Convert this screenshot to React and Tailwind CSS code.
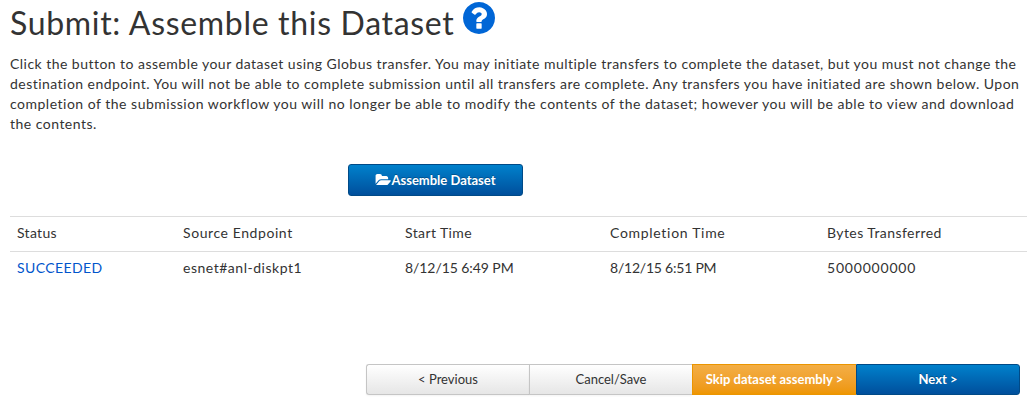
const columns = [
  { label: 'Status', value: 'SUCCEEDED', width: 'w-[166px]', head: 'tracking-[0.3px]', cell: 'tracking-[0.4px] text-[#0055cc]' },
  { label: 'Source Endpoint', value: 'esnet#anl-diskpt1', width: 'w-[222px]', head: 'tracking-[0.58px]', cell: 'tracking-[0.52px]' },
  { label: 'Start Time', value: '8/12/15 6:49 PM', width: 'w-[205px]', head: 'tracking-[0.4px]', cell: 'tracking-[-0.07px]' },
  { label: 'Completion Time', value: '8/12/15 6:51 PM', width: 'w-[217px]', head: 'tracking-[0.7px]', cell: 'tracking-[-0.22px]' },
  { label: 'Bytes Transferred', value: '5000000000', width: 'w-[207px]', head: 'tracking-[0.43px]', cell: 'tracking-[0.8px]' },
];

function HelpIcon() {
  return (
    <svg viewBox="128 128 1536 1536" className="mt-[2px] h-8 w-8 shrink-0 fill-[#0066d6]" aria-hidden="true">
      <path d="M1024 1376v-192q0-14-9-23t-23-9h-192q-14 0-23 9t-9 23v192q0 14 9 23t23 9h192q14 0 23-9t9-23zm256-672q0-88-55.5-163t-138.5-116-170-41q-243 0-371 213-15 24 8 42l132 100q7 6 19 6 16 0 25-12 53-68 86-92 34-24 86-24 48 0 85.5 26t37.5 59q0 38-20 61t-68 45q-63 28-115.5 86.5t-52.5 125.5v36q0 14 9 23t23 9h192q14 0 23-9t9-23q0-19 21.5-49.5t54.5-49.5q32-18 49-28.5t46-35 44.5-48 28-60.5 12.5-81zm384 192q0 209-103 385.5t-279.5 279.5-385.5 103-385.5-103-279.5-279.5-103-385.5 103-385.5 279.5-279.5 385.5-103 385.5 103 279.5 279.5 103 385.5z" />
    </svg>
  );
}

function FolderOpenIcon() {
  return (
    <svg viewBox="0 128 1943 1408" className="h-[11.5px] w-[16px] shrink-0 fill-white" aria-hidden="true">
      <path d="M1943 952q0 31-31 66l-336 396q-43 51-120.5 86.5t-143.5 35.5h-1088q-34 0-60.5-13t-26.5-43q0-31 31-66l336-396q43-51 120.5-86.5t143.5-35.5h1088q34 0 60.5 13t26.5 43zm-343-344v160h-832q-94 0-197 47.5t-164 119.5l-337 396-5 6q0-4-.5-12.5t-.5-12.5v-960q0-92 66-158t158-66h320q92 0 158 66t66 158v32h544q92 0 158 66t66 158z" />
    </svg>
  );
}

export default function App() {
  return (
    <main className="h-[404px] w-[1027px] overflow-hidden bg-white pl-[10px] font-['Lato',sans-serif] text-sm leading-5 text-[#333]">
      <header className="flex h-[54px] items-start gap-[9px]">
        <h1 className="w-[444px] whitespace-nowrap pt-[3px] text-[32px] leading-10 tracking-[0.68px]">Submit: Assemble this Dataset</h1>
        <HelpIcon />
      </header>

      <p className="flex flex-col whitespace-nowrap">
        <span className="tracking-[0.466px]">Click the button to assemble your dataset using Globus transfer. You may initiate multiple transfers to complete the dataset, but you must not change the</span>
        <span className="tracking-[0.463px]">destination endpoint. You will not be able to complete submission until all transfers are complete. Any transfers you have initiated are shown below. Upon</span>
        <span className="tracking-[0.503px]">completion of the submission workflow you will no longer be able to modify the contents of the dataset; however you will be able to view and download</span>
        <span className="tracking-[0.48px]">the contents.</span>
      </p>

      <button className="ml-[338px] mt-[30px] flex h-8 w-[175px] items-center justify-center rounded-[3px] border border-[#004a87] bg-linear-to-b from-[#0081cc] to-[#004f9c] pb-px text-[13px] font-bold text-white [text-shadow:0_-1px_0_rgba(0,0,0,0.25)]">
        <FolderOpenIcon />
        <span>Assemble Dataset</span>
      </button>

      <table className="mt-5 w-[1017px] table-fixed border-collapse text-left">
        <thead>
          <tr className="h-[35px] border-t border-[#ddd]">
            {columns.map((c) => (
              <th key={c.label} className={`${c.width} ${c.head} pb-0.5 pl-[7px] font-normal`}>{c.label}</th>
            ))}
          </tr>
        </thead>
        <tbody>
          <tr className="h-[35px] border-t border-[#ddd]">
            {columns.map((c) => (
              <td key={c.label} className={`${c.cell} pb-0.5 pl-[7px]`}>{c.value}</td>
            ))}
          </tr>
        </tbody>
      </table>

      <nav className="ml-[356px] mt-[77px] flex h-[31px] w-[654px] text-[13px]">
        <button className="w-[163px] rounded-l-[3px] border border-r-0 border-[#c5c5c5] bg-linear-to-b from-white to-[#e6e6e6] pb-px shadow-[0_1px_2px_rgba(0,0,0,0.05)]">&lt; Previous</button>
        <button className="w-[163px] border border-r-0 border-[#c5c5c5] bg-linear-to-b from-white to-[#e6e6e6] pb-px shadow-[0_1px_2px_rgba(0,0,0,0.05)]">Cancel/Save</button>
        <button className="w-[164px] whitespace-nowrap border border-r-0 border-[#eb9500] bg-linear-to-b from-[#f3ae45] to-[#ee9600] pb-px font-bold text-white">Skip dataset assembly &gt;</button>
        <button className="w-[164px] rounded-r-[3px] border border-[#004a87] bg-linear-to-b from-[#0081cc] to-[#004f9c] pb-px font-bold text-white [text-shadow:0_-1px_0_rgba(0,0,0,0.25)]">Next &gt;</button>
      </nav>
    </main>
  );
}
